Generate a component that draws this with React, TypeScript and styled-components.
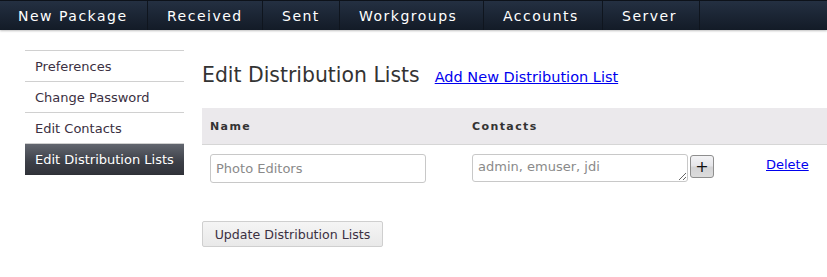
import React from 'react';
import styled, { createGlobalStyle } from 'styled-components';

const GlobalStyle = createGlobalStyle`
  html, body {
    margin: 0;
    padding: 0;
    background: #ffffff;
    font-family: 'DejaVu Sans', Verdana, sans-serif;
    color: #333;
  }
`;

const navItems = [
  { label: 'New Package', width: 148 },
  { label: 'Received', width: 115 },
  { label: 'Sent', width: 77 },
  { label: 'Workgroups', width: 144 },
  { label: 'Accounts', width: 119 },
  { label: 'Server', width: 97 },
];
const sideItems = ['Preferences', 'Change Password', 'Edit Contacts', 'Edit Distribution Lists'];

const NavBar = styled.nav`
  display: flex;
  height: 30px;
  background: linear-gradient(#243042, #1b2534 50%, #131b27);
  border-top: 1px solid #0d121a;
  box-sizing: border-box;
  box-shadow: 0 1px 2px rgba(0, 0, 0, 0.25);
`;

const NavItem = styled.a<{ $first?: boolean }>`
  display: flex;
  align-items: center;
  box-sizing: border-box;
  padding-left: ${(p) => (p.$first ? '18px' : '19px')};
  border-right: 1px solid #0f151e;
  color: #ffffff;
  font-size: 14px;
  letter-spacing: 1.5px;
  text-decoration: none;
  white-space: nowrap;
`;

const Body = styled.div`
  display: flex;
  padding: 20px 0 0 25px;
  gap: 18px;
`;

const Sidebar = styled.ul`
  list-style: none;
  margin: 0;
  padding: 0;
  width: 159px;
  border-top: 1px solid #d0d0d0;
  flex-shrink: 0;
`;

const SideItem = styled.li<{ $active?: boolean }>`
  height: 30px;
  display: flex;
  align-items: center;
  padding-left: 10px;
  font-size: 13px;
  color: ${(p) => (p.$active ? '#ffffff' : '#3b3042')};
  border-bottom: 1px solid ${(p) => (p.$active ? '#2e3036' : '#d0d0d0')};
  background: ${(p) => (p.$active ? 'linear-gradient(#62666f, #3c3f47 60%, #31333a)' : 'transparent')};
`;

const Main = styled.div`
  flex: 1;
  display: flex;
  flex-direction: column;
`;

const TitleRow = styled.div`
  display: flex;
  align-items: baseline;
  gap: 15px;
  margin-top: 13px;
  height: 37px;
`;

const Title = styled.h1`
  margin: 0;
  font-size: 20.4px;
  font-weight: normal;
  color: #333;
`;

const Link = styled.a<{ $size?: number }>`
  color: #0000ee;
  text-decoration: underline;
  font-size: ${(p) => p.$size ?? 14.5}px;
  cursor: pointer;
`;

const Table = styled.div`
  margin-top: 8px;
  display: grid;
  grid-template-columns: 262px 294px 1fr;
`;

const HeadCell = styled.div`
  height: 36px;
  display: flex;
  align-items: center;
  padding-left: 8px;
  background: #ebe9ec;
  border-bottom: 1px solid #d6d6d6;
  font-size: 11px;
  font-weight: bold;
  letter-spacing: 1.4px;
  color: #333;
`;

const Cell = styled.div<{ $top?: number }>`
  display: flex;
  align-items: flex-start;
  padding: ${(p) => p.$top ?? 9}px 0 0 8px;
  height: 40px;
`;

const TextInput = styled.input`
  width: 216px;
  height: 29px;
  box-sizing: border-box;
  border: 1px solid #c8c8c8;
  border-radius: 3px;
  padding: 0 5px;
  font-family: 'DejaVu Sans', Verdana, sans-serif;
  font-size: 13px;
  color: #333;
  &::placeholder {
    color: #8a8a8a;
  }
`;

const Area = styled.textarea`
  width: 216px;
  height: 28px;
  box-sizing: border-box;
  border: 1px solid #c8c8c8;
  border-radius: 3px;
  padding: 4px 5px;
  font-family: 'DejaVu Sans', Verdana, sans-serif;
  font-size: 13px;
  color: #333;
  resize: both;
  overflow: hidden;
  &::placeholder {
    color: #8a8a8a;
  }
`;

const PlusButton = styled.button`
  width: 24px;
  height: 23px;
  margin: 1px 0 0 2px;
  padding: 0;
  border: 1px solid #8e8e8e;
  border-radius: 3px;
  background: linear-gradient(#f3f3f5, #e6e6ea 45%, #d4d4d6 55%, #dcdcdc);
  font-family: 'DejaVu Sans', Verdana, sans-serif;
  font-size: 16px;
  line-height: 1;
  color: #111;
`;

const UpdateButton = styled.button`
  align-self: flex-start;
  margin-top: 24px;
  width: 181px;
  height: 26px;
  border: 1px solid #cfcfcf;
  border-radius: 2px;
  background: linear-gradient(#f5f5f5, #e9e9e9);
  font-family: 'DejaVu Sans', Verdana, sans-serif;
  font-size: 12.6px;
  color: #3b3042;
`;

export default function App() {
  return (
    <>
      <GlobalStyle />
      <NavBar>
        {navItems.map((n, i) => (
          <NavItem key={n.label} $first={i === 0} style={{ width: n.width }}>
            {n.label}
          </NavItem>
        ))}
      </NavBar>
      <Body>
        <Sidebar>
          {sideItems.map((s, i) => (
            <SideItem key={s} $active={i === sideItems.length - 1}>
              {s}
            </SideItem>
          ))}
        </Sidebar>
        <Main>
          <TitleRow>
            <Title>Edit Distribution Lists</Title>
            <Link>Add New Distribution List</Link>
          </TitleRow>
          <Table>
            <HeadCell>Name</HeadCell>
            <HeadCell>Contacts</HeadCell>
            <HeadCell />
            <Cell>
              <TextInput placeholder="Photo Editors" />
            </Cell>
            <Cell>
              <Area placeholder="admin, emuser, jdi" />
              <PlusButton>+</PlusButton>
            </Cell>
            <Cell $top={12}>
              <Link $size={13}>Delete</Link>
            </Cell>
          </Table>
          <UpdateButton>Update Distribution Lists</UpdateButton>
        </Main>
      </Body>
    </>
  );
}
